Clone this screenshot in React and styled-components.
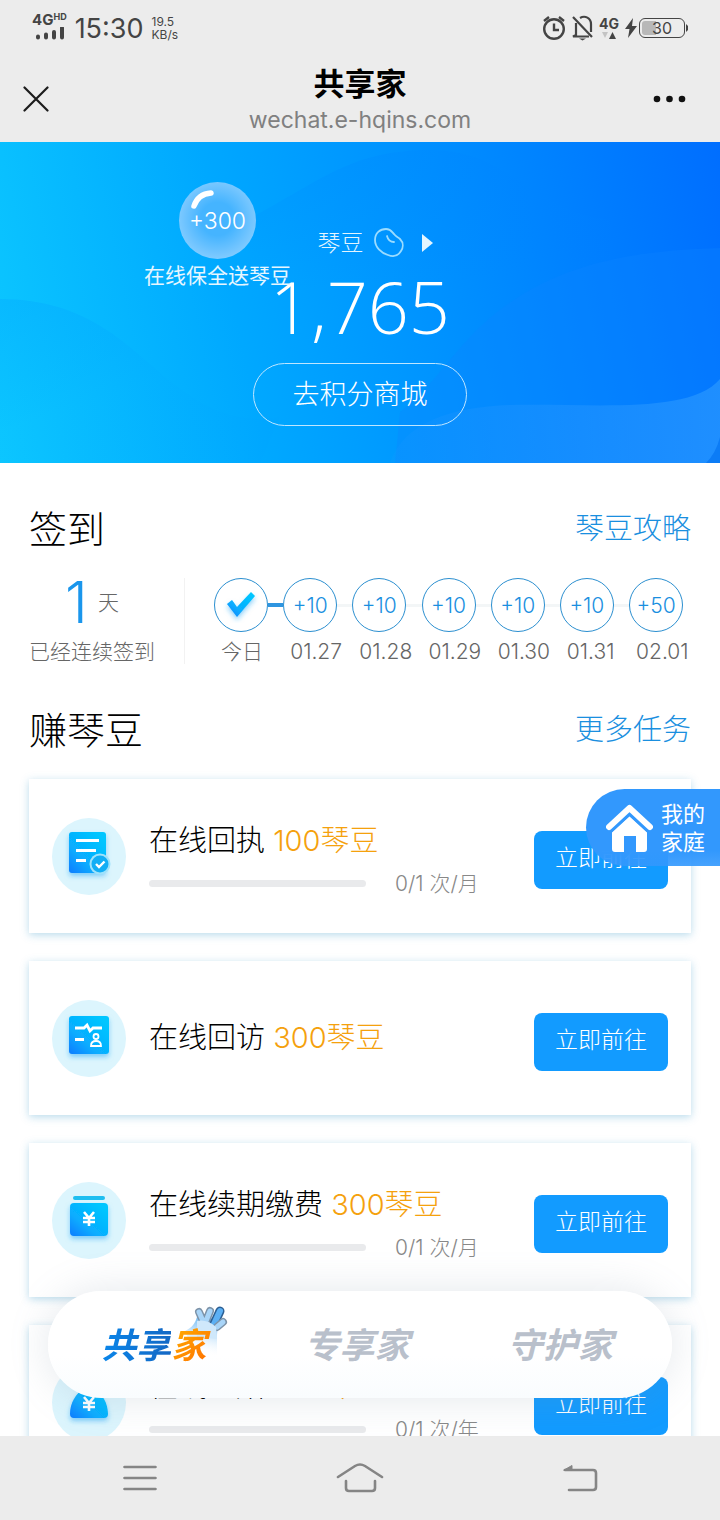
import React from 'react';
import styled, { createGlobalStyle, css } from 'styled-components';

const GlobalStyle = createGlobalStyle`
    * {
        box-sizing: border-box;
    }

    body {
        margin: 0;
        background: #fff;
        font-family: Inter, "Noto Sans CJK SC", sans-serif;
        font-weight: 300;
        color: #000;
    }

    button {
        font: inherit;
        border: 0;
        padding: 0;
        background: none;
        cursor: pointer;
    }

    a {
        text-decoration: none;
    }

    h1, h2, h3, p, ul {
        margin: 0;
        padding: 0;
        font-weight: inherit;
        list-style: none;
    }

    svg {
        display: block;
    }
`;

const Screen = styled.div`
    display: flex;
    flex-direction: column;
    height: 100vh;
    overflow: hidden;
`;

/* Phone status bar */
const StatusBar = styled.div`
    display: flex;
    justify-content: space-between;
    align-items: center;
    height: 56px;
    padding: 0 32px;
    background: #ececec;
    color: #444;
`;

const StatusGroup = styled.div`
    display: flex;
    align-items: center;
    gap: ${props => props.gap}px;
`;

const Network = styled.div`
    display: flex;
    flex-direction: column;
    align-items: center;
    font-size: ${props => props.size}px;
    line-height: 14px;
    font-weight: 700;

    sup {
        font-size: 9px;
        line-height: 8px;
        vertical-align: 5px;
    }
`;

const Clock = styled.span`
    padding-top: 2px;
    font-size: 27px;
    line-height: 32px;
    font-weight: 400;
`;

const Speed = styled.span`
    display: flex;
    flex-direction: column;
    font-size: 12px;
    line-height: 13px;
    font-weight: 400;
`;

const Battery = styled.span`
    display: flex;
    align-items: center;
    justify-content: center;
    width: 46px;
    height: 20px;
    border: 1px solid #444;
    border-radius: 6px;
    background: linear-gradient(to right, #b8b8b8 14px, transparent 14px) content-box;
    padding: 2px;
    font-size: 16px;
    line-height: 16px;
    font-weight: 400;
`;

/* Browser title bar */
const TitleBar = styled.header`
    display: grid;
    grid-template-columns: 72px 1fr 72px;
    align-items: center;
    justify-items: center;
    height: 86px;
    background: #ececec;
`;

const PageTitle = styled.div`
    padding-top: 4px;
    text-align: center;

    h1 {
        font-size: 31px;
        line-height: 38px;
        font-weight: 700;
    }

    p {
        font-size: 23px;
        line-height: 34px;
        font-weight: 400;
        color: #808080;
    }
`;

const Viewport = styled.div`
    position: relative;
    display: flex;
    flex: 1;
    min-height: 0;
`;

const Scroller = styled.main`
    flex: 1;
    overflow-y: auto;
    scrollbar-width: none;
`;

/* Points banner */
const Hero = styled.section`
    position: relative;
    display: flex;
    flex-direction: column;
    align-items: center;
    padding: 84px 0 37px;
    background: linear-gradient(78deg, #0cc8ff 0%, #00a8ff 34%, #008eff 64%, #006eff 100%);
    color: #fff;
`;

const HeroWaves = styled.svg`
    position: absolute;
    inset: 0;
    width: 100%;
    height: 100%;
`;

const PointsLabel = styled.button`
    position: relative;
    display: flex;
    align-items: center;
    gap: 10px;
    padding-left: 30px;
    font-size: 23px;
    line-height: 34px;
    color: #e4f5ff;

    svg:last-child {
        margin-left: 7px;
    }
`;

const Points = styled.div`
    position: relative;
    font-family: "Open Sans", "Noto Sans", sans-serif;
    font-size: 72px;
    line-height: 92px;
`;

const MallButton = styled.button`
    position: relative;
    width: 214px;
    height: 63px;
    margin-top: 11px;
    padding-bottom: 4px;
    border: 1px solid #bfe6ff;
    border-radius: 32px;
    font-size: 27px;
    color: #fff;
`;

const BubbleTask = styled.button`
    position: absolute;
    top: 40px;
    left: 20%;
    display: flex;
    flex-direction: column;
    align-items: center;
    font-size: 21px;
    line-height: 34px;
    font-weight: 400;
    color: #e6f6ff;
`;

const Bubble = styled.span`
    position: relative;
    display: flex;
    align-items: center;
    justify-content: center;
    width: 77px;
    height: 77px;
    border-radius: 50%;
    background: radial-gradient(circle at 50% 48%, #45b4ff 30%, #70c4ff 60%, #a4daff 100%);
    font-size: 23px;
    font-weight: 300;
    color: #fff;

    svg {
        position: absolute;
        top: 7px;
        left: 11px;
    }
`;

const Section = styled.section`
    padding: 38px 29px 0;
`;

const SectionHead = styled.div`
    display: flex;
    justify-content: space-between;
    align-items: center;
    height: 56px;
    margin-bottom: 21px;

    h2 {
        font-size: 38px;
        line-height: 56px;
    }

    a {
        font-size: 29px;
        line-height: 56px;
        color: #1a8fdf;
    }
`;

/* Daily check-in */
const CheckIn = styled.div`
    display: flex;
    align-items: stretch;
`;

const Streak = styled.div`
    display: flex;
    flex-direction: column;
    justify-content: space-between;
    padding-right: 29px;
    border-right: 1px solid #f2f2f2;
    font-size: 21px;
    line-height: 25px;
    color: #666;
`;

const StreakCount = styled.div`
    display: flex;
    align-items: center;
    justify-content: center;
    gap: 10px;
    height: 48px;

    strong {
        font-size: 58px;
        font-weight: 300;
        color: #1a96ec;
    }
`;

const Days = styled.ul`
    display: flex;
    flex: 1;
    margin-left: 29px;
`;

const Day = styled.li`
    flex: 1;
    font-size: 21px;
    line-height: 25px;
    color: #666;

    &:last-child {
        flex: none;
        width: 62px;
    }
`;

const DayTrack = styled.div`
    display: flex;
    align-items: center;
    margin-bottom: 7px;

    &::after {
        content: '';
        flex: 1;
        height: ${props => (props.done ? 4 : 3)}px;
        background: ${props => (props.done ? '#2e95e0' : '#f3f6f7')};
    }

    ${Day}:last-child &::after {
        display: none;
    }
`;

const DayCircle = styled.button`
    display: flex;
    align-items: center;
    justify-content: center;
    width: 54px;
    height: 54px;
    border: 1px solid #2b8fd0;
    border-radius: 50%;
    color: #1a8fdf;
`;

const DayDate = styled.span`
    padding-left: 7px;
    white-space: nowrap;
`;

/* Task list */
const TaskList = styled.ul`
    display: flex;
    flex-direction: column;
    gap: 28px;
    padding-bottom: 160px;
`;

const TaskCard = styled.li`
    display: flex;
    align-items: center;
    height: 154px;
    padding: 0 23px;
    background: #fff;
    box-shadow: 0 2px 8px rgba(70, 160, 205, 0.38);
`;

const TaskInfo = styled.div`
    flex: 1;
    margin-left: 23px;
    padding-top: ${props => (props.counted ? 6 : 0)}px;
`;

const TaskTitle = styled.h3`
    font-size: 29px;
    line-height: 42px;
    white-space: nowrap;

    span {
        color: #f5a10d;
    }
`;

const TaskProgress = styled.label`
    display: flex;
    align-items: center;
    gap: 29px;
    margin-top: 7px;
    font-size: 21px;
    line-height: 30px;
    color: #888;

    span {
        width: 139px;
    }
`;

const Bar = styled.progress`
    appearance: none;
    flex: 1;
    min-width: 0;
    height: 7px;
    border: 0;
    border-radius: 4px;
    background: #e9eaec;
    overflow: hidden;

    &::-webkit-progress-bar {
        background: #e9eaec;
    }

    &::-webkit-progress-value {
        background: #129bff;
    }
`;

const GoButton = styled.button`
    width: 134px;
    height: 58px;
    margin-top: 8px;
    padding-bottom: 8px;
    border-radius: 8px;
    background: #129bff;
    font-size: 23px;
    color: #fff;
`;

/* Floating entry on the right edge */
const FamilyButton = styled.button`
    position: absolute;
    top: 647px;
    right: 0;
    display: flex;
    align-items: center;
    gap: 8px;
    height: 77px;
    padding: 0 15px 0 20px;
    border-radius: 39px 0 0 39px;
    background: linear-gradient(to bottom, #3298fd 80%, rgba(50, 152, 253, 0.9));
    font-size: 22px;
    line-height: 28px;
    font-weight: 400;
    color: #fff;
`;

/* Floating tabs */
const TabBar = styled.nav`
    position: absolute;
    right: 48px;
    bottom: 38px;
    left: 48px;
    display: flex;
    align-items: center;
    height: 107px;
    padding: 0 7px;
    border-radius: 54px;
    background: linear-gradient(to bottom, #fff 60%, #f9fcfe);
    box-shadow: 0 0 40px rgba(120, 140, 160, 0.2);
`;

const gradientText = css`
    background: ${props => props.fill};
    background-clip: text;
    color: transparent;
`;

const Tab = styled.button`
    position: relative;
    flex: 1;
    padding-right: 6px;
    font-size: 35px;
    line-height: 50px;
    font-weight: 700;
    font-style: italic;
    color: #b9c0cb;
`;

const TabWord = styled.span`
    position: relative;
    ${gradientText}

    /* room for the slanted edge of the last glyph */
    &:last-child {
        margin-right: -6px;
        padding-right: 6px;
    }
`;

const HandMark = styled.svg`
    position: absolute;
    top: -15px;
    left: 130px;
`;

/* Phone navigation keys */
const SystemNav = styled.nav`
    display: flex;
    height: 84px;
    padding: 0 30px;
    background: #ececec;
`;

const SystemKey = styled.button`
    display: flex;
    flex: 1;
    align-items: center;
    justify-content: center;
`;

const days = [
    { label: '今日', done: true },
    { label: '01.27', bonus: '+10' },
    { label: '01.28', bonus: '+10' },
    { label: '01.29', bonus: '+10' },
    { label: '01.30', bonus: '+10' },
    { label: '01.31', bonus: '+10' },
    { label: '02.01', bonus: '+50' },
];

const tasks = [
    { icon: 'receipt', title: '在线回执', reward: '100琴豆', count: '0/1 次/月' },
    { icon: 'visit', title: '在线回访', reward: '300琴豆' },
    { icon: 'wallet', title: '在线续期缴费', reward: '300琴豆', count: '0/1 次/月' },
    { icon: 'bag', title: '在线理赔', reward: '300琴豆', count: '0/1 次/年' },
];

const Yen = ({ y }) => (
    <path
        d={`M32 ${y}l5 6 5-6M37 ${y + 6}v8M31 ${y + 6}h12M31 ${y + 10}h12`}
        fill="none"
        stroke="#fff"
        strokeWidth="2.6"
    />
);

const iconShapes = {
    receipt: (
        <>
            <rect x="17" y="14" width="37" height="41" rx="3" fill="url(#taskFill)" filter="url(#taskGlow)" />
            <path d="M24 22.500h23M24 32.500h20M24 42.500h10" stroke="#fff" strokeWidth="3" />
            <circle cx="48" cy="46" r="10.500" fill="#9fe2fb" />
            <circle cx="48" cy="46" r="8.500" fill="#12aef5" />
            <path d="M44 46l3 3 5.500-5.500" fill="none" stroke="#fff" strokeWidth="2.400" />
        </>
    ),
    visit: (
        <>
            <rect x="17" y="16" width="40" height="38" rx="3" fill="url(#taskFill)" filter="url(#taskGlow)" />
            <path d="M23 28h9l3-3 3 6 3-3h9M23 39.500h9" fill="none" stroke="#fff" strokeWidth="2.800" />
            <circle cx="44" cy="36.500" r="2.500" fill="none" stroke="#fff" strokeWidth="1.800" />
            <path d="M39 46c0-3 2-5 5-5s5 2 5 5z" fill="none" stroke="#fff" strokeWidth="1.800" />
        </>
    ),
    wallet: (
        <>
            <rect x="21" y="14" width="32" height="4" rx="2" fill="#1fbef0" />
            <rect x="18" y="21" width="38" height="33" rx="4" fill="url(#taskFill)" filter="url(#taskGlow)" />
            <Yen y={30} />
        </>
    ),
    bag: (
        <>
            <path
                d="M29 17h16l-3 8c8 4 14 14 14 25q0 4-4 4H22q-4 0-4-4c0-11 6-21 14-25z"
                fill="url(#taskFill)"
                filter="url(#taskGlow)"
            />
            <Yen y={33} />
        </>
    ),
};

const TaskIcon = ({ name }) => (
    <svg width="74" height="77" viewBox="0 0 74 77" aria-hidden="true">
        <defs>
            <linearGradient id="taskFill" x1="0.85" y1="0.1" x2="0" y2="1">
                <stop offset="0" stopColor="#00c6ff" />
                <stop offset="0.600" stopColor="#08acff" />
                <stop offset="1" stopColor="#0a7cff" />
            </linearGradient>
            <filter id="taskGlow" x="-30%" y="-30%" width="160%" height="170%">
                <feDropShadow dx="0" dy="3" stdDeviation="2.500" floodColor="#1aa5f5" floodOpacity="0.5" />
            </filter>
        </defs>
        <ellipse cx="37" cy="38.500" rx="37" ry="38.500" fill="#dcf5fd" />
        {iconShapes[name]}
    </svg>
);

const Status = () => (
    <StatusBar>
        <StatusGroup gap={8}>
            <Network size={15}>
                <span>4G<sup>HD</sup></span>
                <svg width="30" height="16" viewBox="0 0 30 16" fill="none" stroke="#444" strokeWidth="4" strokeLinecap="round">
                    <path d="M4 9.500v1M12 7.500v3M20 5v5.500M28 1v9.500" />
                </svg>
            </Network>
            <Clock>15:30</Clock>
            <Speed>
                <span>19.5</span>
                <span>KB/s</span>
            </Speed>
        </StatusGroup>
        <StatusGroup gap={5}>
            <svg width="26" height="26" viewBox="0 0 26 26" fill="none" stroke="#444" strokeWidth="2.400">
                <circle cx="13" cy="14" r="9.800" />
                <path d="M13 8.500V15h5M3 6l5-4M18 2l5 4" />
            </svg>
            <svg width="22" height="26" viewBox="0 0 22 26" fill="none" stroke="#444" strokeWidth="2.200">
                <path d="M1 2l19 20M4 8v12l-3 1.500h16M8 3c5-3 11 0 11 6v8" />
                <path d="M7 23.500h7l-3.500 2z" fill="#444" stroke="none" />
            </svg>
            <Network size={14}>
                <span>4G</span>
                <svg width="16" height="9" viewBox="0 0 16 9">
                    <path d="M1 1h6l-3 6z" fill="#c4c4c4" />
                    <path d="M8 8h7l-3.500-7z" fill="#444" />
                </svg>
            </Network>
            <StatusGroup gap={1}>
                <svg width="14" height="22" viewBox="0 0 14 22">
                    <path d="M9 1L1 12h4.500L4 21l9-12H8z" fill="#444" />
                </svg>
                <Battery>30</Battery>
                <svg width="2" height="8" viewBox="0 0 2 8">
                    <path d="M0 0l2 2v4l-2 2z" fill="#444" />
                </svg>
            </StatusGroup>
        </StatusGroup>
    </StatusBar>
);

const HeroBanner = () => (
    <Hero>
        <HeroWaves viewBox="0 0 720 321" preserveAspectRatio="none" aria-hidden="true">
            <defs>
                <linearGradient id="waveLeft" x1="0" y1="0" x2="0.6" y2="1">
                    <stop offset="0" stopColor="#0090ff" stopOpacity="0.2" />
                    <stop offset="0.600" stopColor="#0090ff" stopOpacity="0.04" />
                </linearGradient>
                <linearGradient id="waveTop" x1="0.4" y1="0" x2="0.5" y2="1">
                    <stop offset="0" stopColor="#0084ff" stopOpacity="0.22" />
                    <stop offset="0.700" stopColor="#0084ff" stopOpacity="0" />
                </linearGradient>
                <linearGradient id="waveFront" x1="0" y1="0" x2="1" y2="0">
                    <stop offset="0" stopColor="#2a98ff" stopOpacity="0.1" />
                    <stop offset="1" stopColor="#2a98ff" stopOpacity="0.7" />
                </linearGradient>
            </defs>
            <path d="M250 76C320 40 350 8 430 8s100 60 180 70v120H250z" fill="url(#waveTop)" />
            <path d="M0 157c90 0 130 50 170 82s70 42 110 36l-20 46H0z" fill="url(#waveLeft)" />
            <path d="M400 270c50-40 60-82 130-122 50-28 110-40 190-42v215H395z" fill="#0c86ff" opacity="0.3" />
            <path d="M390 321c14-40 60-56 120-58 80-2 180 10 210-26v84z" fill="url(#waveFront)" />
            <path d="M706 321q10-10 14-26v26z" fill="#0070f0" opacity="0.6" />
        </HeroWaves>
        <PointsLabel type="button">
            琴豆
            <svg width="30" height="30" viewBox="0 0 30 30" fill="none" stroke="#9bdcff" strokeWidth="1.800" strokeLinecap="round">
                <path d="M1 12C1 5 6 1 12 1c5 0 6 3 8 5 2 3 4 3 6 5 4 4 3 9 1 12-3 5-8 6-13 4C7 25 1 19 1 12z" />
                <path d="M13 8c1 4 3 6 7 6" />
            </svg>
            <svg width="12" height="18" viewBox="0 0 12 18">
                <path d="M1 0l11 9-11 9z" fill="#e4f5ff" />
            </svg>
        </PointsLabel>
        <Points>1,765</Points>
        <MallButton type="button">去积分商城</MallButton>
        <BubbleTask type="button">
            <Bubble>
                <svg width="26" height="21" viewBox="0 0 26 21" fill="none" stroke="#fff" strokeWidth="5.500" strokeLinecap="round">
                    <path d="M4 17Q8 5 21 4" />
                </svg>
                +300
            </Bubble>
            在线保全送琴豆
        </BubbleTask>
    </Hero>
);

const CheckInSection = () => (
    <Section>
        <SectionHead>
            <h2>签到</h2>
            <a href="#guide">琴豆攻略</a>
        </SectionHead>
        <CheckIn>
            <Streak>
                <StreakCount><strong>1</strong>天</StreakCount>
                已经连续签到
            </Streak>
            <Days>
                {days.map(({ label, bonus, done }) => (
                    <Day key={label}>
                        <DayTrack done={done}>
                            <DayCircle type="button" aria-label={done ? '已签到' : undefined}>
                                {done ? (
                                    <svg width="36" height="36" viewBox="0 0 36 36">
                                        <path
                                            d="M4 17l5-4 5 7L28 5l4 4-18 21z"
                                            fill="url(#taskFill)"
                                            filter="url(#taskGlow)"
                                        />
                                    </svg>
                                ) : bonus}
                            </DayCircle>
                        </DayTrack>
                        <DayDate>{label}</DayDate>
                    </Day>
                ))}
            </Days>
        </CheckIn>
    </Section>
);

const TaskSection = () => (
    <Section>
        <SectionHead>
            <h2>赚琴豆</h2>
            <a href="#tasks">更多任务</a>
        </SectionHead>
        <TaskList>
            {tasks.map(({ icon, title, reward, count }) => (
                <TaskCard key={title}>
                    <TaskIcon name={icon} />
                    <TaskInfo counted={Boolean(count)}>
                        <TaskTitle>{title} <span>{reward}</span></TaskTitle>
                        {
                            count &&
                            <TaskProgress>
                                <Bar value={0} max={1} />
                                <span>{count}</span>
                            </TaskProgress>
                        }
                    </TaskInfo>
                    <GoButton type="button">立即前往</GoButton>
                </TaskCard>
            ))}
        </TaskList>
    </Section>
);

const Tabs = () => (
    <TabBar>
        <Tab type="button">
            <HandMark width="44" height="52" viewBox="0 0 44 52" aria-hidden="true">
                <defs>
                    <linearGradient id="palm" x1="0.6" y1="0" x2="0.4" y2="1">
                        <stop offset="0" stopColor="#6bb8f6" />
                        <stop offset="0.450" stopColor="#cfe8fb" />
                        <stop offset="0.950" stopColor="#fff" stopOpacity="0" />
                    </linearGradient>
                </defs>
                <path d="M0 26C8 22 10 18 12 12l20 2c2 6 0 12 0 18v18L10 50z" fill="url(#palm)" />
                {/* fingers: a dark outline stroke under a lighter one */}
                <g fill="none" strokeLinecap="round">
                    <path d="M14 7l4 9M25 6l-4 10" stroke="#7d93a8" strokeWidth="8" />
                    <path d="M14 7l4 9M25 6l-4 10" stroke="#a9d5f8" strokeWidth="5" />
                    <path d="M35 6l-6 13" stroke="#2c5f93" strokeWidth="9" />
                    <path d="M35 6l-6 13" stroke="#5cb0f4" strokeWidth="6" />
                    <path d="M38 17l-6 5" stroke="#7d93a8" strokeWidth="8" />
                    <path d="M38 17l-6 5" stroke="#a9d5f8" strokeWidth="5" />
                </g>
                <path d="M12 16q10-2 19 6l1 12-20-2z" fill="#cfe8fb" />
            </HandMark>
            <TabWord fill="linear-gradient(to right, #0a86ea, #1468c4)">共享</TabWord>
            <TabWord fill="linear-gradient(to bottom right, #ffb300, #ff6a00)">家</TabWord>
        </Tab>
        <Tab type="button">专享家</Tab>
        <Tab type="button">守护家</Tab>
    </TabBar>
);

const App = () => (
    <>
        <GlobalStyle />
        <Screen>
            <Status />
            <TitleBar>
                <button type="button" aria-label="关闭">
                    <svg width="26" height="26" viewBox="0 0 26 26" stroke="#1c1c1c" strokeWidth="2.200" strokeLinecap="round">
                        <path d="M1.500 1.500l23 23M24.500 1.500l-23 23" />
                    </svg>
                </button>
                <PageTitle>
                    <h1>共享家</h1>
                    <p>wechat.e-hqins.com</p>
                </PageTitle>
                <button type="button" aria-label="更多">
                    <svg width="72" height="8" viewBox="0 0 72 8" fill="#111">
                        <circle cx="9" cy="4" r="3.300" />
                        <circle cx="21.500" cy="4" r="3.300" />
                        <circle cx="34" cy="4" r="3.300" />
                    </svg>
                </button>
            </TitleBar>
            <Viewport>
                <Scroller>
                    <HeroBanner />
                    <CheckInSection />
                    <TaskSection />
                </Scroller>
                <FamilyButton type="button">
                    <svg width="47" height="50" viewBox="0 0 47 50">
                        <path d="M3 24L23.500 5 44 24" fill="none" stroke="#fff" strokeWidth="6" strokeLinecap="round" strokeLinejoin="round" />
                        <path d="M6 29L23.500 13 41 29v17q0 3-3 3h-8V33H18v16H9q-3 0-3-3z" fill="#fff" />
                        <path d="M5 29L23.500 12 42 29" fill="none" stroke="#3298fd" strokeWidth="2" />
                    </svg>
                    <span>我的<br />家庭</span>
                </FamilyButton>
                <Tabs />
            </Viewport>
            <SystemNav>
                <SystemKey type="button" aria-label="菜单">
                    <svg width="34" height="28" viewBox="0 0 34 28" stroke="#858585" strokeWidth="2.600" strokeLinecap="round">
                        <path d="M1.500 3h31M1.500 14h31M1.500 25h31" />
                    </svg>
                </SystemKey>
                <SystemKey type="button" aria-label="主页">
                    <svg width="48" height="32" viewBox="0 0 48 32" fill="none" stroke="#858585" strokeWidth="2.600" strokeLinecap="round">
                        <path d="M2 15L19 4q5-3 10 0l17 11M10 19v7q0 3 3 3h23q3 0 3-3v-7" />
                    </svg>
                </SystemKey>
                <SystemKey type="button" aria-label="返回">
                    <svg width="36" height="30" viewBox="0 0 36 30" fill="none" stroke="#858585" strokeWidth="2.600" strokeLinecap="round" strokeLinejoin="round">
                        <path d="M3 7h28q3 0 3 3v14q0 3-3 3H7" />
                        <path d="M2 7l8-4.500V7z" fill="#858585" strokeWidth="1" />
                    </svg>
                </SystemKey>
            </SystemNav>
        </Screen>
    </>
);

export default App;
